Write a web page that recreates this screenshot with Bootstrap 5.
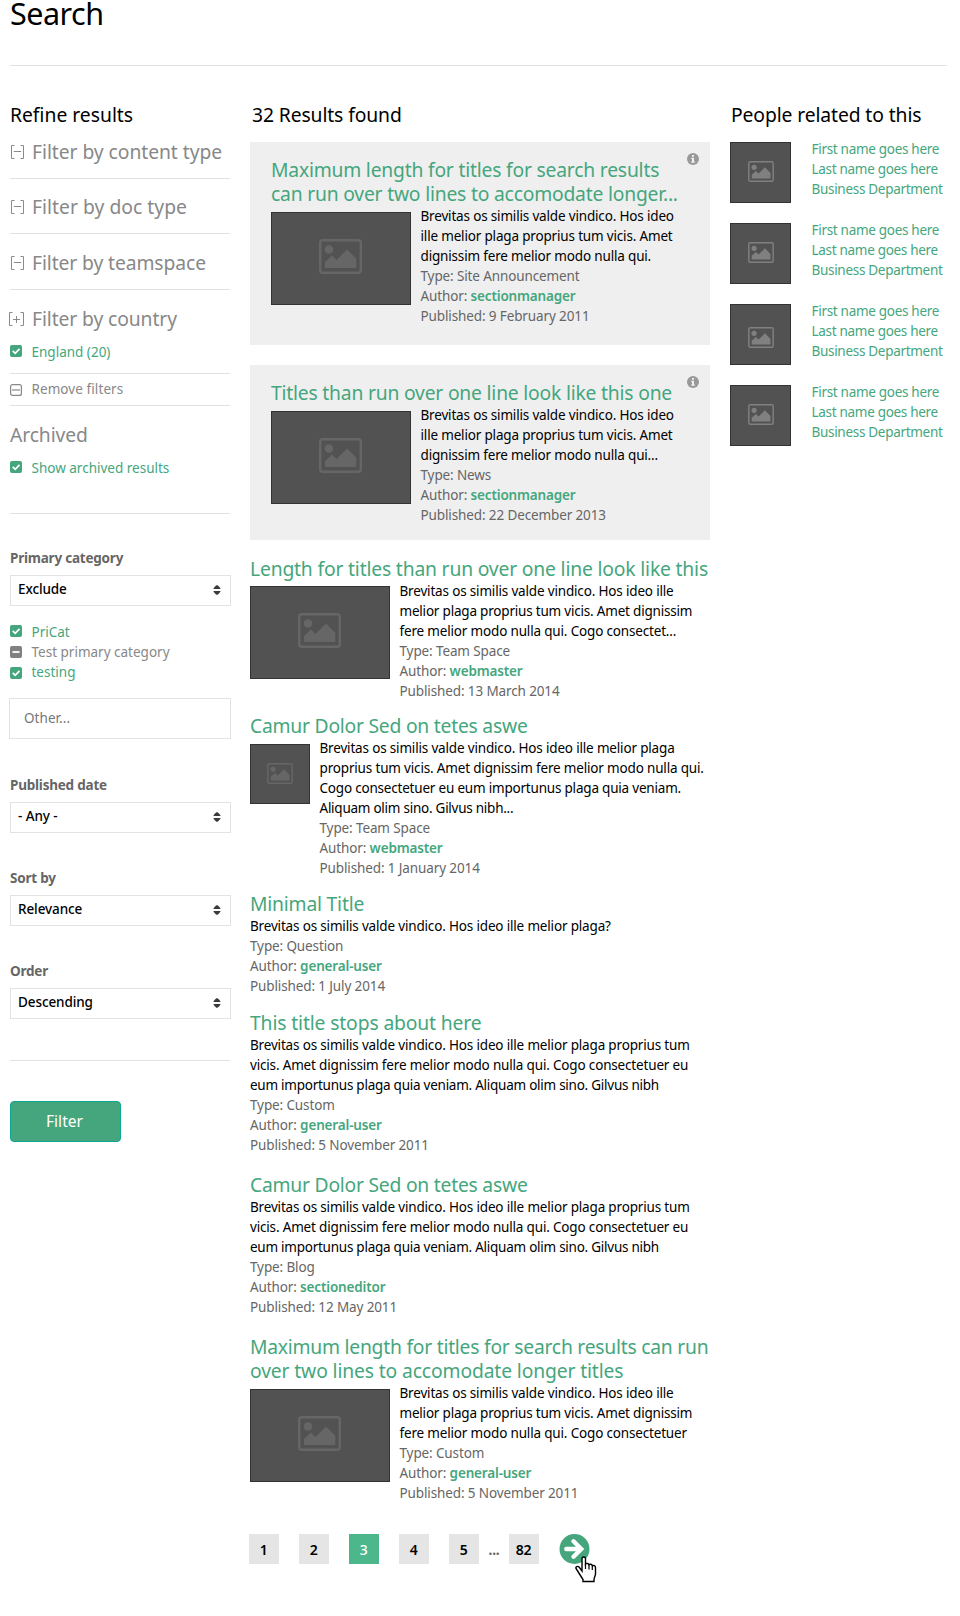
<!DOCTYPE html>
<html lang="en">
<head>
<meta charset="utf-8">
<meta name="viewport" content="width=device-width, initial-scale=1">
<title>Search</title>
<link rel="stylesheet" href="https://cdn.jsdelivr.net/npm/bootstrap@5.3.0/dist/css/bootstrap.min.css">
<style>
:root{--green:#45a67d;--grey:#888;--line:#e2e2e2}
body{font-family:"Noto Sans","Open Sans",sans-serif;font-size:13.5px;line-height:20px;letter-spacing:-.17px;color:#000;background:#fff}
a{color:var(--green);text-decoration:none}
svg{display:block;flex:none}
.page{padding:0 13px 0 10px;width:960px;min-height:1616px}
h1{font-size:30.5px;line-height:26px;font-weight:400;letter-spacing:-.5px;margin:0 0 39px}
.rule{height:1px;background:var(--line)}
h2{font-size:19.3px;line-height:24px;font-weight:400;letter-spacing:-.1px;margin:0 0 15px;padding-left:1px;white-space:nowrap}
.cols{padding-top:37px}
.side{width:221px;margin-right:19px}
.side .rule{width:220px}
.side h2{padding-left:0;letter-spacing:0}
.main{width:460px;margin-right:20px}
.people{width:217px}

/* sidebar */
.fold{width:220px;height:55px;padding-bottom:14px;border-bottom:1px solid var(--line);font-size:19.3px;line-height:24px;letter-spacing:-.1px;color:var(--grey);white-space:nowrap}
.fold svg{margin:0 7px 5px 0}
.opt{height:20px;letter-spacing:0;white-space:nowrap}
.opt svg{margin-right:9.5px}
.side h3{font-size:19.3px;line-height:24px;font-weight:400;color:var(--grey);margin:0;letter-spacing:-.1px}
.label-b{font-weight:700;color:#666;display:block;height:20px;letter-spacing:-.22px}
.pick{width:221px;height:31px;border:1px solid #e3e3e3;margin-top:7px;padding:0 9px 3px 7px;font-weight:500;letter-spacing:-.1px}
.pick svg{margin-top:2px}
.other{width:222px;height:41px;margin-left:-1px;border:1px solid #e3e3e3;border-radius:0;padding:0 13px 1px 14px;font-size:13.5px;color:#777;letter-spacing:.05px;box-shadow:none}
.other::placeholder{color:#777;opacity:1}
.btn-go{width:111px;height:41px;background:var(--green);border:1px solid #0ca794;border-radius:4px;color:#fff;font-size:15.5px;line-height:20px;padding:0 2px 2px 0;letter-spacing:.05px}

/* results */
.panel{background:#efefef;padding:16px 21px 0;margin-bottom:20px;position:relative}
.panel .info{position:absolute;right:11px;top:11px}
.hit-title{font-size:19.3px;line-height:24px;font-weight:400;letter-spacing:-.2px;color:var(--green);margin:0;white-space:nowrap}
.meta{color:#666;white-space:nowrap;letter-spacing:-.12px}
.txt{white-space:nowrap}
.tight{letter-spacing:-.25px}
.meta a{font-weight:600;letter-spacing:-.16px}
.thumb{flex:none;display:flex;align-items:center;justify-content:center;background:#525252;border:1px solid #333;color:#666;margin:6px 9.5px 0 0}
.wide{width:140px;height:93px;padding:0 2px 4px 0}
.sq{width:60px;height:60px;padding-bottom:2px}
.g13{margin-bottom:13px}.g14{margin-bottom:14px}.g15{margin-bottom:15px}.g18{margin-bottom:18px}.g31{margin-bottom:31px}
.person{height:61px;margin-bottom:20px;letter-spacing:-.3px;white-space:nowrap}
.person .thumb{width:61px;height:61px;color:#808080;margin:0 20.500px 0 0;padding-bottom:3px}
.person .thumb.low{padding:5px 0 0}
.person a{margin-top:-3px}

/* pager */
.pager{margin-left:-1px}
.pg{width:30px;height:30px;background:#e5e5e5;color:#000;font-weight:600;font-size:14px;display:flex;align-items:center;justify-content:center;padding:2px 1px 0 0;letter-spacing:-.3px;margin-right:20px}
.pg.now{background:#4bb78b;color:#fff;font-weight:500}
.next{position:relative}
.next .hand{position:absolute;left:16px;top:22px}
</style>
</head>
<body>
<svg width="0" height="0" class="position-absolute">
  <symbol id="pic" viewBox="0 0 43 35"><rect x="1.2" y="1.2" width="40.6" height="32.6" rx="2.5" fill="none" stroke="currentColor" stroke-width="2.4"/><circle cx="10" cy="10.5" r="4.3" fill="currentColor"/><path d="M6 29v-6l7-6.5 4.500 4.500L28 10.500l9.300 9.300V29z" fill="currentColor"/></symbol>
  <symbol id="tick" viewBox="0 0 12 12"><rect width="12" height="12" rx="2" fill="#45a67d"/><path d="M2.700 5.900l2.500 2.500 4.300-4.500" fill="none" stroke="#fff" stroke-width="1.700"/></symbol>
  <symbol id="minus" viewBox="0 0 15 14"><path d="M4.500.5H1.500v13h3M10.500.5h3v13h-3M3.800 6.500h7.400" fill="none" stroke="#8a8a8a"/></symbol>
  <symbol id="plus" viewBox="0 0 16 14"><path d="M3.500.5H.5v13h3M11.500.5h3v13h-3M4 7.500h7M7.500 4v7" fill="none" stroke="#8a8a8a"/></symbol>
  <symbol id="sort" viewBox="0 0 8 10"><path d="M4 0c1.500 1 3.200 2.600 3.700 4H.3C.8 2.600 2.500 1 4 0zM4 10c1.500-1 3.200-2.600 3.700-4H.3C.8 7.400 2.500 9 4 10z" fill="#3a3a3a"/></symbol>
  <symbol id="info" viewBox="0 0 12 12"><circle cx="6" cy="6" r="6" fill="#999"/><path d="M5 2h2v1.700H5zM4.200 4.800H7v3.600h.8v1.300H4.200V8.400H5V6h-.8z" fill="#efefef"/></symbol>
</svg>

<div class="page">
  <h1>Search</h1>
  <div class="rule"></div>
  <div class="cols d-flex align-items-start">

    <aside class="side flex-shrink-0">
      <h2 class="mb-0">Refine results</h2>
      <div class="fold d-flex align-items-end" style="height:52px;letter-spacing:-.05px"><svg width="15" height="14"><use href="#minus"/></svg>Filter by content type</div>
      <div class="fold d-flex align-items-end" style="letter-spacing:.03px"><svg width="15" height="14"><use href="#minus"/></svg>Filter by doc type</div>
      <div class="fold d-flex align-items-end" style="height:56px"><svg width="15" height="14"><use href="#minus"/></svg>Filter by teamspace</div>
      <div class="fold d-flex align-items-end border-0 pb-0" style="height:41px"><svg width="16" height="14" style="margin:0 7px 5px -1px"><use href="#plus"/></svg>Filter by country</div>
      <a href="#" class="opt d-flex" style="margin-top:11px"><svg width="12" height="12" style="margin-top:3px"><use href="#tick"/></svg>England (20)</a>
      <div class="rule" style="margin-top:11px"></div>
      <div class="opt d-flex" style="height:31px;padding-top:5px;color:#888;letter-spacing:.08px"><svg width="12" height="12" style="margin-top:5px" viewBox="0 0 12 12"><rect x=".6" y=".6" width="10.800" height="10.800" rx="2" fill="none" stroke="#888" stroke-width="1.200"/><path d="M2 6h8" stroke="#888" stroke-width="1.200"/></svg>Remove filters</div>
      <div class="rule"></div>
      <h3 style="margin-top:17px">Archived</h3>
      <a href="#" class="opt d-flex" style="margin-top:11px"><svg width="12" height="12" style="margin-top:3px"><use href="#tick"/></svg>Show archived results</a>
      <div class="rule" style="margin-top:35px"></div>

      <span class="label-b" style="margin-top:34px">Primary category</span>
      <div class="pick d-flex align-items-center justify-content-between">Exclude<svg width="8" height="10"><use href="#sort"/></svg></div>
      <a href="#" class="opt d-flex" style="margin-top:16px"><svg width="12" height="12" style="margin-top:3px"><use href="#tick"/></svg>PriCat</a>
      <div class="opt d-flex" style="color:#888"><svg width="12" height="12" class="mt-1" viewBox="0 0 12 12"><rect width="12" height="12" rx="2" fill="#808080"/><path d="M2.500 6h7" stroke="#fff" stroke-width="1.800"/></svg>Test primary category</div>
      <a href="#" class="opt d-flex"><svg width="12" height="12" style="margin-top:5px"><use href="#tick"/></svg>testing</a>
      <input class="form-control other" style="margin-top:16px" placeholder="Other...">

      <span class="label-b" style="margin-top:36px">Published date</span>
      <div class="pick d-flex align-items-center justify-content-between">- Any -<svg width="8" height="10"><use href="#sort"/></svg></div>
      <span class="label-b" style="margin-top:35px">Sort by</span>
      <div class="pick d-flex align-items-center justify-content-between">Relevance<svg width="8" height="10"><use href="#sort"/></svg></div>
      <span class="label-b" style="margin-top:35px">Order</span>
      <div class="pick d-flex align-items-center justify-content-between">Descending<svg width="8" height="10"><use href="#sort"/></svg></div>
      <div class="rule" style="margin-top:41px"></div>
      <button class="btn btn-go" style="margin-top:40px">Filter</button>
    </aside>

    <main class="main flex-shrink-0">
      <h2 style="padding-left:2px;letter-spacing:-.1px">32 Results found</h2>

      <article class="panel" style="height:203px">
        <svg class="info" width="12" height="12"><use href="#info"/></svg>
        <h3 class="hit-title">Maximum length for titles for search results<br>can run over two lines to accomodate longer...</h3>
        <div class="d-flex align-items-start">
          <div class="thumb wide"><svg width="43" height="35"><use href="#pic"/></svg></div>
          <div><div class="txt">Brevitas os similis valde vindico. Hos ideo<br>ille melior plaga proprius tum vicis. Amet<br>dignissim fere melior modo nulla qui.</div>
          <div class="meta">Type: Site Announcement<br>Author: <a href="#">sectionmanager</a><br>Published: 9 February 2011</div></div>
        </div>
      </article>

      <article class="panel" style="height:175px;margin-bottom:17px">
        <svg class="info" width="12" height="12"><use href="#info"/></svg>
        <h3 class="hit-title">Titles than run over one line look like this one</h3>
        <div class="d-flex align-items-start">
          <div class="thumb wide"><svg width="43" height="35"><use href="#pic"/></svg></div>
          <div><div class="txt">Brevitas os similis valde vindico. Hos ideo<br>ille melior plaga proprius tum vicis. Amet<br>dignissim fere melior modo nulla qui...</div>
          <div class="meta">Type: News<br>Author: <a href="#">sectionmanager</a><br>Published: 22 December 2013</div></div>
        </div>
      </article>

      <article class="g13">
        <h3 class="hit-title" style="letter-spacing:-.17px">Length for titles than run over one line look like this</h3>
        <div class="d-flex align-items-start">
          <div class="thumb wide" style="margin-top:5px"><svg width="43" height="35"><use href="#pic"/></svg></div>
          <div><div class="txt">Brevitas os similis valde vindico. Hos ideo ille<br><span style="letter-spacing:-.2px">melior plaga proprius tum vicis. Amet dignissim</span><br>fere melior modo nulla qui. Cogo consectet...</div>
          <div class="meta">Type: Team Space<br>Author: <a href="#">webmaster</a><br>Published: 13 March 2014</div></div>
        </div>
      </article>

      <article class="g14">
        <h3 class="hit-title" style="letter-spacing:-.23px">Camur Dolor Sed on tetes aswe</h3>
        <div class="d-flex align-items-start">
          <div class="thumb sq"><svg width="26" height="21"><use href="#pic"/></svg></div>
          <div><div class="txt">Brevitas os similis valde vindico. Hos ideo ille melior plaga<br>proprius tum vicis. Amet dignissim fere melior modo nulla qui.<br><span style="letter-spacing:-.2px">Cogo consectetuer eu eum importunus plaga quia veniam.</span><br><span class="tight">Aliquam olim sino. Gilvus nibh...</span></div>
          <div class="meta">Type: Team Space<br>Author: <a href="#">webmaster</a><br>Published: 1 January 2014</div></div>
        </div>
      </article>

      <article class="g15">
        <h3 class="hit-title">Minimal Title</h3>
        <div class="txt">Brevitas os similis valde vindico. Hos ideo ille melior plaga?</div>
        <div class="meta">Type: Question<br>Author: <a href="#">general-user</a><br>Published: 1 July 2014</div>
      </article>

      <article class="g18">
        <h3 class="hit-title" style="letter-spacing:-.13px">This title stops about here</h3>
        <div class="txt">Brevitas os similis valde vindico. Hos ideo ille melior plaga proprius tum<br>vicis. Amet dignissim fere melior modo nulla qui. Cogo consectetuer eu<br><span class="tight">eum importunus plaga quia veniam. Aliquam olim sino. Gilvus nibh</span></div>
        <div class="meta">Type: Custom<br>Author: <a href="#">general-user</a><br>Published: 5 November 2011</div>
      </article>

      <article class="g18">
        <h3 class="hit-title" style="letter-spacing:-.23px">Camur Dolor Sed on tetes aswe</h3>
        <div class="txt">Brevitas os similis valde vindico. Hos ideo ille melior plaga proprius tum<br>vicis. Amet dignissim fere melior modo nulla qui. Cogo consectetuer eu<br><span class="tight">eum importunus plaga quia veniam. Aliquam olim sino. Gilvus nibh</span></div>
        <div class="meta">Type: Blog<br>Author: <a href="#">sectioneditor</a><br>Published: 12 May 2011</div>
      </article>

      <article class="g31">
        <h3 class="hit-title"><span style="letter-spacing:-.24px">Maximum length for titles for search results can run</span><br><span style="letter-spacing:-.13px">over two lines to accomodate longer titles</span></h3>
        <div class="d-flex align-items-start">
          <div class="thumb wide"><svg width="43" height="35"><use href="#pic"/></svg></div>
          <div><div class="txt">Brevitas os similis valde vindico. Hos ideo ille<br><span style="letter-spacing:-.2px">melior plaga proprius tum vicis. Amet dignissim</span><br>fere melior modo nulla qui. Cogo consectetuer</div>
          <div class="meta">Type: Custom<br>Author: <a href="#">general-user</a><br>Published: 5 November 2011</div></div>
        </div>
      </article>

      <nav class="pager d-flex align-items-center">
        <a href="#" class="pg">1</a><a href="#" class="pg">2</a><a href="#" class="pg now">3</a><a href="#" class="pg">4</a><a href="#" class="pg me-0">5</a>
        <span class="text-center fw-bold" style="width:30px;color:#666;padding-top:2px">...</span>
        <a href="#" class="pg">82</a>
        <a href="#" class="next"><svg width="31" height="30" viewBox="0 0 31 30"><circle cx="15.500" cy="15" r="15" fill="#45a67d"/><path d="M7.300 15H22M14.500 7.300l7.700 7.700-7.700 7.700" fill="none" stroke="#fff" stroke-width="4.400" stroke-linecap="round" stroke-linejoin="miter"/></svg>
          <svg class="hand" width="22" height="27" viewBox="0 0 22 27"><path d="M7 15V2.500C7 .5 10.500.5 10.500 2.500V8c1-1 3-.7 3.500.7 1-.9 2.900-.5 3.300 1 1.200-.6 3.200 0 3.200 2V18c0 2-1.500 3.500-1.500 5.500V25.500H8V23.500L4.500 18 1 12.500c-.6-1.500 1.500-3 3-1.500z" fill="#fff" stroke="#000" stroke-width="1.400"/><path d="M10.500 8v5M14 9v4.500M17.300 10v4" stroke="#000" stroke-width="1.200"/></svg></a>
      </nav>
    </main>

    <aside class="people flex-shrink-0">
      <h2>People related to this</h2>
      <div class="person d-flex"><div class="thumb"><svg width="26" height="21"><use href="#pic"/></svg></div><a href="#">First name goes here<br>Last name goes here<br>Business Department</a></div>
      <div class="person d-flex"><div class="thumb"><svg width="26" height="21"><use href="#pic"/></svg></div><a href="#">First name goes here<br>Last name goes here<br>Business Department</a></div>
      <div class="person d-flex"><div class="thumb low"><svg width="26" height="21"><use href="#pic"/></svg></div><a href="#">First name goes here<br>Last name goes here<br>Business Department</a></div>
      <div class="person d-flex"><div class="thumb"><svg width="26" height="21"><use href="#pic"/></svg></div><a href="#">First name goes here<br>Last name goes here<br>Business Department</a></div>
    </aside>
  </div>
</div>
<script src="https://cdn.jsdelivr.net/npm/bootstrap@5.3.0/dist/js/bootstrap.bundle.min.js"></script>
</body>
</html>
